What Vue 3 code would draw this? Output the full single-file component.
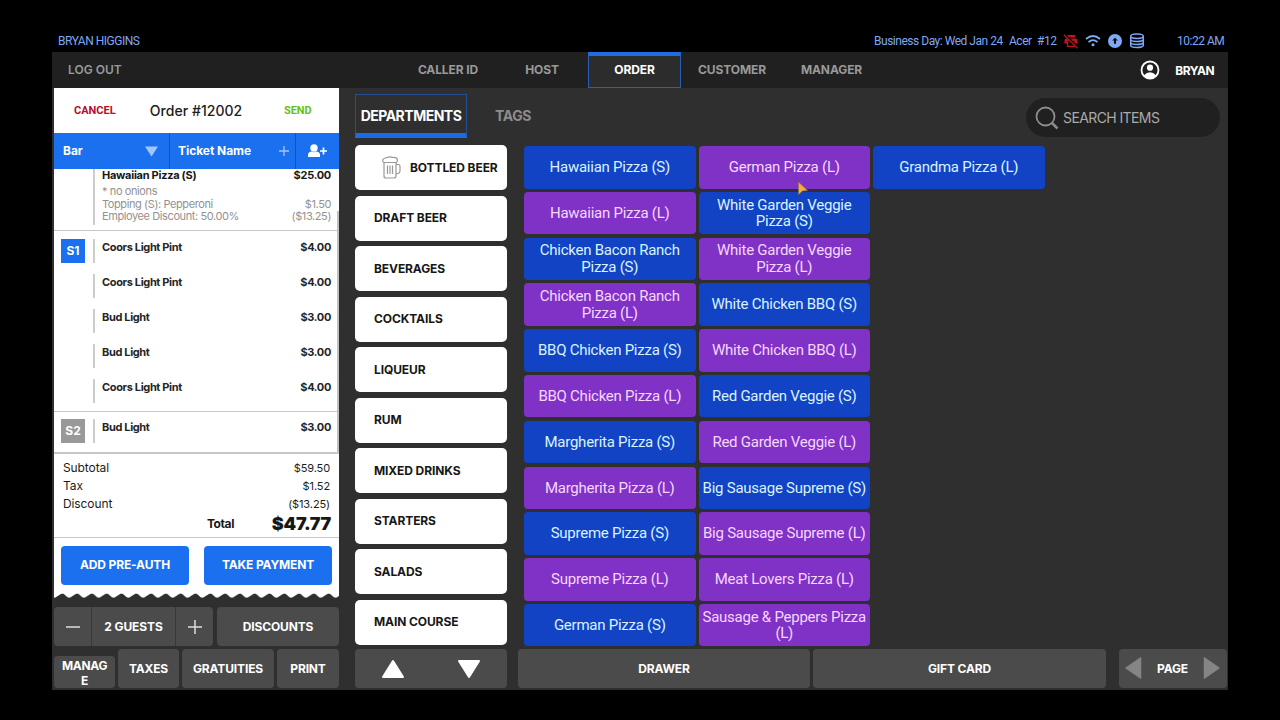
<script setup>
const nav = [
  { t: 'CALLER ID', c: 'n1' }, { t: 'HOST', c: 'n2' }, { t: 'ORDER', c: 'n3 active' },
  { t: 'CUSTOMER', c: 'n4' }, { t: 'MANAGER', c: 'n5' },
]
const departments = ['BOTTLED BEER', 'DRAFT BEER', 'BEVERAGES', 'COCKTAILS', 'LIQUEUR', 'RUM', 'MIXED DRINKS', 'STARTERS', 'SALADS', 'MAIN COURSE']
const columns = [
  ['Hawaiian Pizza (S)', 'Hawaiian Pizza (L)', 'Chicken Bacon Ranch Pizza (S)', 'Chicken Bacon Ranch Pizza (L)', 'BBQ Chicken Pizza (S)', 'BBQ Chicken Pizza (L)', 'Margherita Pizza (S)', 'Margherita Pizza (L)', 'Supreme Pizza (S)', 'Supreme Pizza (L)', 'German Pizza (S)'],
  ['German Pizza (L)', 'White Garden Veggie Pizza (S)', 'White Garden Veggie Pizza (L)', 'White Chicken BBQ (S)', 'White Chicken BBQ (L)', 'Red Garden Veggie (S)', 'Red Garden Veggie (L)', 'Big Sausage Supreme (S)', 'Big Sausage Supreme (L)', 'Meat Lovers Pizza (L)', 'Sausage & Peppers Pizza (L)'],
  ['Grandma Pizza (L)'],
]
const isPurple = (name, col) => col < 2 && name.endsWith('(L)')
const seat1 = [['Coors Light Pint', '$4.00'], ['Coors Light Pint', '$4.00'], ['Bud Light', '$3.00'], ['Bud Light', '$3.00'], ['Coors Light Pint', '$4.00']]
const totals = [['Subtotal', '$59.50'], ['Tax', '$1.52'], ['Discount', '($13.25)']]
</script>

<template>
  <div class="screen">
    <header class="status">
      <span class="who">BRYAN HIGGINS</span>
      <div class="info">
        <span class="day">Business Day: Wed Jan 24</span>
        <span class="acer">Acer</span>
        <span class="num">#12</span>
        <svg class="i1" width="16" height="16" viewBox="0 0 16 16"><path d="M4 2H12V4.500H4zM1.500 10.500V7.500Q1.500 5.500 3.500 5.500H12.500Q14.500 5.500 14.500 7.500V10.500H12V8.500H4V10.500z" fill="#c3131f" /><path d="M4.500 9V13.300H11.500V9" fill="none" stroke="#c3131f" stroke-width="1.300" /><path d="M1.500 1.500L15 15" stroke="#000" stroke-width="2.500" /><path d="M1 2L14.500 15.200" stroke="#c3131f" stroke-width="1.200" /></svg>
        <svg class="i2" width="16" height="14" viewBox="0 0 16 14" fill="none" stroke="#7fa8f5" stroke-width="1.700"><path d="M1 5q7-6 14 0M3.500 8.200q4.500-4 9 0" /><circle cx="8" cy="10.800" r="1.500" fill="#7fa8f5" stroke="none" /></svg>
        <svg class="i3" width="14" height="14" viewBox="0 0 14 14"><circle cx="7" cy="7" r="7" fill="#7fa8f5" /><path d="M7 3.700L9.800 6.600H8V9.800H6V6.600H4.200z" fill="#05070c" /></svg>
        <svg class="i4" width="16" height="16" viewBox="0 0 16 16" fill="none" stroke="#7fa8f5" stroke-width="1.500"><ellipse cx="8" cy="3.300" rx="6.300" ry="2.200" /><path d="M1.700 3.500v9c0 2.600 12.600 2.600 12.600 0v-9M1.700 6.500c0 2.600 12.600 2.600 12.600 0M1.700 9.500c0 2.600 12.600 2.600 12.600 0" /></svg>
        <span class="time">10:22 AM</span>
      </div>
    </header>

    <div class="app">
      <nav class="topnav">
        <span class="logout">LOG OUT</span>
        <div class="tabs"><div v-for="n in nav" :key="n.t" class="tab" :class="n.c">{{ n.t }}</div></div>
        <div class="user">
          <svg width="20" height="20" viewBox="0 0 20 20"><circle cx="10" cy="10" r="8.500" fill="none" stroke="#fff" stroke-width="1.800" /><circle cx="10" cy="7.700" r="3.100" fill="#fff" /><path d="M3.800 15.500Q10 9 16.200 15.500Q10 21 3.800 15.500z" fill="#fff" /></svg>
          <span>BRYAN</span>
        </div>
      </nav>

      <div class="main">
        <aside class="left">
          <section class="receipt">
            <div class="order"><span class="cancel">CANCEL</span><span class="title">Order #12002</span><span class="send">SEND</span></div>
            <div class="bluebar">
              <div class="bar"><span>Bar</span><svg width="13" height="11" viewBox="0 0 13 11"><path d="M0 0.500h13L6.500 10.500z" fill="#a4c6ff" /></svg></div>
              <div class="tname"><span>Ticket Name</span><svg width="10" height="10" viewBox="0 0 10 10"><path d="M5 0v10M0 5h10" stroke="#a4c6ff" stroke-width="1.300" /></svg></div>
              <div class="add"><svg width="19" height="14" viewBox="0 0 19 14" fill="#fff"><circle cx="6" cy="4" r="3.700" /><path d="M0 13V11Q0 7.500 4 7.500Q6 9 8 7.500Q12 7.500 12 11V13z" /><path d="M15.500 3.500v7M12 7h7" stroke="#fff" stroke-width="1.700" /></svg></div>
            </div>
            <div class="list">
              <div class="pizza">
                <div class="line">
                  <p class="b"><span>Hawaiian Pizza (S)</span><span>$25.00</span></p>
                  <p class="g first"><span>* no onions</span></p>
                  <p class="g"><span>Topping (S): Pepperoni</span><span>$1.50</span></p>
                  <p class="g"><span>Employee Discount: 50.00%</span><span>($13.25)</span></p>
                </div>
              </div>
              <div class="seat s1">
                <div class="badge">S1</div>
                <div class="rows"><div v-for="(r, i) in seat1" :key="i" class="row"><span>{{ r[0] }}</span><span>{{ r[1] }}</span></div></div>
              </div>
              <div class="seat s2">
                <div class="badge grey">S2</div>
                <div class="rows"><div class="row"><span>Bud Light</span><span>$3.00</span></div></div>
              </div>
              <i class="scroll"></i>
            </div>
            <div class="totals">
              <p v-for="t in totals" :key="t[0]"><span>{{ t[0] }}</span><span class="amt">{{ t[1] }}</span></p>
              <div class="total"><span>Total</span><strong>$47.77</strong></div>
            </div>
            <div class="pay"><button>ADD PRE-AUTH</button><button>TAKE PAYMENT</button></div>
          </section>
          <svg class="zig" width="285" height="6" viewBox="0 0 285 6"><defs><pattern id="teeth" width="14.800" height="6" patternUnits="userSpaceOnUse"><path d="M0 0H14.800V4.500L13.800 4.500L9.500 0.800H7.300L1 4.700L0 4.500z" fill="#fff" /></pattern></defs><rect width="285" height="6" fill="url(#teeth)" /></svg>
          <div class="r1">
            <div class="guests">
              <div class="gb"><svg width="14" height="14" viewBox="0 0 14 14"><path d="M0 7h14" stroke="#ddd" stroke-width="1.500" /></svg></div>
              <div class="gm">2 GUESTS</div>
              <div class="gb"><svg width="14" height="14" viewBox="0 0 14 14"><path d="M0 7h14M7 0v14" stroke="#ddd" stroke-width="1.500" /></svg></div>
            </div>
            <div class="gray disc">DISCOUNTS</div>
          </div>
          <div class="r2">
            <div class="gray manage">MANAG<br>E</div><div class="gray taxes">TAXES</div><div class="gray grat">GRATUITIES</div><div class="gray print">PRINT</div>
          </div>
        </aside>

        <section class="right">
          <div class="tools">
            <div class="dtab">DEPARTMENTS</div>
            <div class="tags">TAGS</div>
            <div class="search"><svg width="24" height="24" viewBox="0 0 24 24" fill="none" stroke="#8c8c8c"><circle cx="10.500" cy="10.500" r="9" stroke-width="1.800" /><path d="M17 17l5.500 5.500" stroke-width="2.500" /></svg><span>SEARCH ITEMS</span></div>
          </div>
          <div class="content">
            <div class="depts">
              <div v-for="(d, i) in departments" :key="d" class="dept" :class="{ beer: i === 0 }">
                <svg v-if="i === 0" width="19" height="23" viewBox="0 0 19 23" fill="none" stroke="#989898" stroke-width="1.200"><path d="M2 6.500Q0 5.500 1 3.500Q2.500 1.500 4.500 1.800Q8 0 11 1.500Q15 1 15.500 4Q15.500 6 14 6.500zM2 6.500V20Q2 22 4 22H12Q14 22 14 20V6.500M14 8.500H16Q18 8.500 18 10.500V15Q18 17 16 17.500L14 18M5.500 9.500v8.500M8 9.500v8.500M10.500 9.500v8.500" /></svg>
                <span>{{ d }}</span>
              </div>
            </div>
            <div class="items">
              <div v-for="(col, ci) in columns" :key="ci" class="col">
                <div v-for="p in col" :key="p" class="item" :class="{ purple: isPurple(p, ci) }"><span>{{ p }}</span></div>
              </div>
              <svg class="cursor" width="12" height="15" viewBox="0 0 12 15"><path d="M1.500 1L10.500 9.500L5.500 10L1.500 13.500z" fill="#f0b03c" stroke="#9a6a50" stroke-width="0.700" /></svg>
            </div>
          </div>
          <div class="foot">
            <div class="gray arrows">
              <svg width="24" height="20" viewBox="0 0 24 20"><path d="M12 2L22 18H2z" fill="#fff" stroke="#fff" stroke-width="2" stroke-linejoin="round" /></svg>
              <svg width="24" height="20" viewBox="0 0 24 20"><path d="M12 18L2 2h20z" fill="#fff" stroke="#fff" stroke-width="2" stroke-linejoin="round" /></svg>
            </div>
            <div class="gray drawer">DRAWER</div>
            <div class="gray gift">GIFT CARD</div>
            <div class="gray page">
              <svg width="18" height="24" viewBox="0 0 18 24"><path d="M2 12L16.500 2v20z" fill="#858585" stroke="#858585" stroke-width="1.500" stroke-linejoin="round" /></svg>
              <span>PAGE</span>
              <svg width="18" height="24" viewBox="0 0 18 24"><path d="M16 12L1.500 2v20z" fill="#858585" stroke="#858585" stroke-width="1.500" stroke-linejoin="round" /></svg>
            </div>
          </div>
        </section>
      </div>
    </div>
  </div>
</template>

<style>
body { background: #000; overflow: hidden; }
</style>
<style scoped>
* { box-sizing: border-box; }
p { margin: 0; }
svg { display: block; flex: none; }
.screen { width: 1280px; height: 720px; background: #000; padding: 30px 52px 0; font-family: Inter, sans-serif; color: #fff; white-space: nowrap; }
.status { height: 22px; display: flex; justify-content: space-between; align-items: center; padding: 0 5px 0 6px; font: 12px/22px Roboto, sans-serif; letter-spacing: -0.48px; color: #7fa8f5; }
.info { display: flex; align-items: center; }
.day { width: 129px; }
.acer { width: 22px; margin-left: 6px; } .num { width: 20px; margin-left: 6px; }
.i1 { margin-left: 6px; } .i2 { margin-left: 6px; } .i3 { margin-left: 7px; } .i4 { margin-left: 7px; } .time { margin-left: 32px; width: 46px; }
.app { width: 1176px; height: 638px; background: #2f2f2f; }
.topnav { height: 36px; background: #202020; display: flex; align-items: center; font-size: 12px; font-weight: 700; letter-spacing: -0.1px; }
.logout { width: 331px; padding: 0 0 1px 16px; color: #999; font-weight: 600; letter-spacing: 0; }
.tabs { display: flex; height: 36px; }
.tab { display: flex; align-items: center; justify-content: center; color: #999; padding-bottom: 1px; }
.n1 { width: 130px; } .n2 { width: 58px; } .n3 { width: 93px; margin-left: 17px; } .n4 { width: 102px; } .n5 { width: 97px; }
.tab.active { color: #fff; background: #2c2c2c; border: 1px solid #2a5fb5; border-top: 4px solid #216ce2; padding-bottom: 4px; }
.user { margin-left: auto; padding-right: 14px; display: flex; align-items: center; gap: 15px; letter-spacing: -0.55px; }
.main { display: flex; height: 602px; }
.left { width: 303px; padding-left: 2px; }
.receipt { width: 285px; height: 505px; background: #fff; color: #1c1c1c; }
.order { height: 45px; display: grid; grid-template-columns: 76px 132px 77px; align-items: center; }
.cancel { font: 700 11px Roboto; color: #b70e2b; padding-left: 20px; } .send { font: 700 11px Roboto; color: #62c312; padding-left: 22px; letter-spacing: -0.1px; }
.title { font-size: 14px; font-weight: 500; text-align: center; letter-spacing: 0.05px; }
.bluebar { height: 36px; background: #1a70ef; color: #fff; display: flex; font-size: 12px; font-weight: 700; letter-spacing: -0.05px; }
.bluebar > div { display: flex; align-items: center; justify-content: space-between; }
.bluebar span { padding-bottom: 1px; }
.bar { width: 115px; padding: 0 11px 0 9px; } .tname { width: 126px; border-left: 1px solid #1254bb; padding: 0 6px 0 8px; }
.bluebar > .add { width: 44px; border-left: 1px solid #1254bb; justify-content: center; }
.list { height: 285px; position: relative; border-bottom: 2px solid #c8c8c8; overflow: hidden; }
.scroll { position: absolute; right: 0; top: 42px; width: 2px; height: 241px; background: #c0c0c0; }
.pizza { height: 62px; border-bottom: 1px solid #c8c8c8; padding-left: 39px; }
.line { height: 56px; border-left: 2px solid #ccc; padding: 0 8px 0 7px; }
.line p { display: flex; justify-content: space-between; }
.line .b { font-weight: 700; font-size: 11px; line-height: 12px; color: #171717; letter-spacing: -0.28px; }
.g { font-size: 11px; line-height: 12.500px; color: #929292; letter-spacing: -0.4px; }
.g.first { margin-top: 4px; }
.seat { display: flex; padding: 8px 8px 0 7px; }
.s1 { height: 181px; border-bottom: 1px solid #c8c8c8; }
.s2 { padding-top: 7px; }
.badge { width: 24px; height: 24px; background: #1a70ef; color: #fff; font-size: 12px; font-weight: 700; display: flex; align-items: center; justify-content: center; padding-bottom: 1px; }
.grey { background: #999; }
.rows { margin-left: 8px; flex: 1; }
.row { height: 24px; margin-bottom: 11.100px; border-left: 2px solid #ccc; padding: 1px 0 0 7px; display: flex; justify-content: space-between; font-size: 11px; line-height: 14px; font-weight: 700; color: #252525; letter-spacing: -0.35px; }
.totals { height: 84px; border-bottom: 1px solid #c8c8c8; padding: 5px 8px 0 9px; font-size: 12px; letter-spacing: -0.1px; }
.totals p { display: flex; justify-content: space-between; height: 18px; line-height: 18px; padding-right: 1px; }
.amt { font-size: 11px; }
.total { display: flex; align-items: center; justify-content: flex-end; height: 20px; font-weight: 700; color: #171717; letter-spacing: -0.4px; }
.total strong { width: 97px; text-align: right; font-size: 18px; letter-spacing: -0.3px; }
.pay { display: flex; justify-content: space-between; padding: 7.500px 7px 0; }
button { width: 128px; height: 39px; border: 0; border-radius: 4px; background: #1a70ef; color: #fff; font: 700 12px Inter; letter-spacing: -0.15px; padding: 0 0 1px; }
.r1 { display: flex; justify-content: space-between; width: 285px; margin-top: 8px; font-size: 12px; font-weight: 700; }
.guests { display: flex; width: 159px; height: 39px; background: #4b4b4b; border-radius: 4px; }
.gb { width: 37px; display: flex; align-items: center; justify-content: center; }
.gm { flex: 1; border: solid #383838; border-width: 0 1px; display: flex; align-items: center; justify-content: center; padding-bottom: 1px; letter-spacing: -0.1px; }
.gray { height: 39px; background: #4b4b4b; border-radius: 4px; display: flex; align-items: center; justify-content: center; font-size: 12px; font-weight: 700; padding-bottom: 1px; letter-spacing: -0.15px; }
.disc { width: 122px; }
.r2 { width: 285px; margin-top: 3px; display: flex; justify-content: space-between; align-items: flex-end; }
.manage { width: 61px; height: 32px; align-items: flex-start; padding: 3px 0 0; line-height: 14.500px; text-align: center; letter-spacing: -0.3px; }
.taxes { width: 61px; } .grat { width: 92px; } .print { width: 62px; }
.right { flex: 1; }
.tools { height: 58px; display: flex; padding-top: 6px; }
.dtab { width: 112px; height: 44px; border: 1px solid #244f94; border-bottom: 5px solid #1a6be4; font-size: 14px; font-weight: 700; line-height: 42px; text-align: center; letter-spacing: -0.5px; }
.tags { margin-left: 28px; font-size: 14px; font-weight: 700; color: #8d8d8d; line-height: 43px; letter-spacing: -0.4px; }
.search { margin: 4px 8px 0 auto; width: 194px; height: 39px; border-radius: 20px; background: #202020; display: flex; align-items: center; padding-left: 9px; gap: 4px; font-size: 14px; letter-spacing: -0.6px; color: #aaa; }
.content { display: flex; height: 503px; }
.depts { width: 152px; margin-top: -0.600px; display: flex; flex-direction: column; gap: 5.500px; }
.dept { height: 45px; flex: none; background: #fff; border-radius: 5px; color: #171717; font-size: 12px; font-weight: 700; display: flex; align-items: center; padding: 0 0 1px 19px; letter-spacing: -0.1px; }
.beer { padding-left: 27px; gap: 9px; }
.items { position: relative; margin-left: 17px; display: flex; gap: 3px; }
.col { width: 171.500px; display: flex; flex-direction: column; gap: 3.300px; }
.item { height: 42.500px; border-radius: 4px; background: #1243c5; color: #d9f3ff; font: 15px/16.500px Roboto, sans-serif; display: flex; align-items: center; justify-content: center; text-align: center; white-space: normal; letter-spacing: -0.25px; }
.purple { background: #7f32c5; color: #f7d6ff; }
.cursor { position: absolute; left: 273px; top: 35px; }
.foot { display: flex; }
.arrows { width: 152px; justify-content: space-between; padding: 0 26px; }
.drawer { width: 292px; margin-left: 11px; } .gift { width: 293px; margin-left: 3px; } .page { width: 108px; margin-left: 13px; justify-content: space-between; padding: 0 6px 1px 5px; }
</style>
